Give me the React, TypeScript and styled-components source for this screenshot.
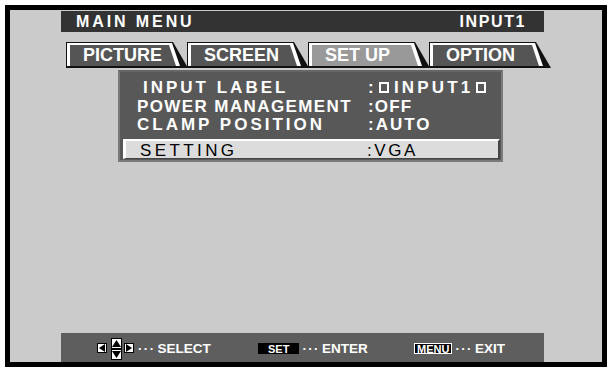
import styled, { createGlobalStyle } from 'styled-components';

const GlobalStyle = createGlobalStyle`
  html, body {
    margin: 0;
    padding: 0;
    background: #ffffff;
  }
  body {
    font-family: 'Liberation Sans', Arial, sans-serif;
  }
`;

const Page = styled.div`
  padding: 5px;
  width: 609px;
  height: 370px;
  box-sizing: border-box;
`;

const Screen = styled.div`
  width: 602px;
  height: 362px;
  box-sizing: border-box;
  border: 5px solid #000;
  background: #cbcbcb;
  display: flex;
  flex-direction: column;
  padding: 1px 0 0 51px;
`;

const TitleBar = styled.div`
  width: 483px;
  height: 21px;
  background: #333333;
  color: #fff;
  display: flex;
  align-items: center;
  justify-content: space-between;
  padding: 1px 18px 0 15px;
  box-sizing: border-box;
  font-weight: bold;
  font-size: 16px;
`;

const TitleText = styled.span<{ $spacing: number }>`
  letter-spacing: ${(p) => p.$spacing}px;
`;

const TabRow = styled.div`
  display: flex;
  margin: 10px 0 0 5px;
`;

const TabOuter = styled.div`
  width: 122px;
  height: 26px;
  margin-right: -1px;
  background: #111;
  clip-path: polygon(0 0, calc(100% - 15px) 0, 100% 100%, 0 100%);
  padding: 1px 0 2px 1px;
  box-sizing: border-box;
`;

const TabHighlight = styled.div`
  height: 100%;
  background: #fff;
  clip-path: polygon(0 0, calc(100% - 16px) 0, calc(100% - 8px) 100%, 0 100%);
  padding: 2px 0 0 3px;
  box-sizing: border-box;
`;

const TabFill = styled.div<{ $active?: boolean }>`
  height: 100%;
  background: ${(p) => (p.$active ? '#999999' : '#555555')};
  clip-path: polygon(0 0, calc(100% - 19px) 0, calc(100% - 12px) 100%, 0 100%);
  color: #fff;
  font-weight: bold;
  font-size: 18px;
  line-height: 21px;
  padding-left: 13px;
  box-sizing: border-box;
  white-space: nowrap;
`;

const Panel = styled.div`
  margin: 2px 0 0 57px;
  width: 385px;
  height: 92px;
  box-sizing: border-box;
  background: #585858;
  border: 2px solid #7a7a7a;
  border-top-color: #666;
  padding: 6px 0 0 17px;
`;

const Row = styled.div`
  display: grid;
  grid-template-columns: 231px auto;
  height: 18.5px;
  align-items: center;
  color: #fff;
  font-weight: bold;
  font-size: 17px;
  white-space: nowrap;
`;

const Label = styled.span<{ $spacing: number; $indent?: number }>`
  letter-spacing: ${(p) => p.$spacing}px;
  padding-left: ${(p) => p.$indent ?? 0}px;
`;

const Value = styled.span<{ $spacing: number }>`
  letter-spacing: ${(p) => p.$spacing}px;
  display: flex;
  align-items: center;
`;

const SelectedRow = styled.div`
  margin: 5.5px 0 0 -14px;
  width: 377px;
  height: 20px;
  box-sizing: border-box;
  background: #dcdcdc;
  border-top: 2px solid #fff;
  border-left: 3px solid #fff;
  border-right: 2px solid #444;
  border-bottom: 1px solid #444;
  display: grid;
  grid-template-columns: 227px auto;
  align-items: center;
  padding-left: 14px;
  color: #000;
  font-size: 17px;
  white-space: nowrap;
`;

const Box = styled.span`
  display: inline-block;
  width: 10px;
  height: 11px;
  border: 2px solid #fff;
  box-sizing: border-box;
  margin: 0 5px 1px 2px;
`;

const Spacer = styled.div`
  flex: 1;
`;

const Footer = styled.div`
  width: 483px;
  height: 29px;
  background: #5e5e5e;
  display: flex;
  align-items: center;
  padding-left: 36px;
  box-sizing: border-box;
  color: #fff;
  font-weight: bold;
  font-size: 13.5px;
`;

const Hint = styled.div<{ $width: number }>`
  display: flex;
  align-items: center;
  width: ${(p) => p.$width}px;
  padding-top: 2px;
`;

const Dots = styled.span`
  font-size: 13px;
  letter-spacing: 1.5px;
  margin: 0 2px 0 3px;
`;

const KeyBadge = styled.span<{ $outlined?: boolean }>`
  display: inline-block;
  background: #000;
  color: #fff;
  font-size: 11px;
  font-weight: bold;
  line-height: 10px;
  height: 11px;
  padding: 0 ${(p) => (p.$outlined ? 2 : 9)}px;
  border: ${(p) => (p.$outlined ? '1px solid #fff' : '1px solid #000')};
  box-sizing: border-box;
`;

const ArrowPad = () => (
  <svg width="38" height="22" viewBox="0 0 38 22">
    <rect x="0.5" y="5.5" width="9" height="9" fill="#fff" stroke="#000" />
    <polygon points="2,10 8,6 8,14" fill="#000" />
    <rect x="14.5" y="0.5" width="10" height="10" fill="#fff" stroke="#000" />
    <polygon points="19.5,2 15,9 24,9" fill="#000" />
    <rect x="14.5" y="11.5" width="10" height="10" fill="#fff" stroke="#000" />
    <polygon points="19.5,20 15,13 24,13" fill="#000" />
    <rect x="27.5" y="5.5" width="9" height="9" fill="#fff" stroke="#000" />
    <polygon points="35,10 29,6 29,14" fill="#000" />
  </svg>
);

const tabs = [
  { label: 'PICTURE' },
  { label: 'SCREEN' },
  { label: 'SET UP', active: true },
  { label: 'OPTION' },
];

export default function App() {
  return (
    <>
      <GlobalStyle />
      <Page>
        <Screen>
          <TitleBar>
            <TitleText $spacing={2.9}>MAIN MENU</TitleText>
            <TitleText $spacing={1.6}>INPUT1</TitleText>
          </TitleBar>
          <TabRow>
            {tabs.map((t) => (
              <TabOuter key={t.label}>
                <TabHighlight>
                  <TabFill $active={t.active}>{t.label}</TabFill>
                </TabHighlight>
              </TabOuter>
            ))}
          </TabRow>
          <Panel>
            <Row>
              <Label $spacing={3} $indent={6}>INPUT LABEL</Label>
              <Value $spacing={3.2}>
                :<Box />INPUT1<Box />
              </Value>
            </Row>
            <Row>
              <Label $spacing={1.4}>POWER MANAGEMENT</Label>
              <Value $spacing={1.2}>:OFF</Value>
            </Row>
            <Row>
              <Label $spacing={3}>CLAMP POSITION</Label>
              <Value $spacing={2}>:AUTO</Value>
            </Row>
            <SelectedRow>
              <Label $spacing={3.4}>SETTING</Label>
              <Value $spacing={2.6}>:VGA</Value>
            </SelectedRow>
          </Panel>
          <Spacer />
          <Footer>
            <Hint $width={161}>
              <ArrowPad />
              <Dots>···</Dots>SELECT
            </Hint>
            <Hint $width={156}>
              <KeyBadge>SET</KeyBadge>
              <Dots>···</Dots>ENTER
            </Hint>
            <Hint $width={100}>
              <KeyBadge $outlined>MENU</KeyBadge>
              <Dots>···</Dots>EXIT
            </Hint>
          </Footer>
        </Screen>
      </Page>
    </>
  );
}
